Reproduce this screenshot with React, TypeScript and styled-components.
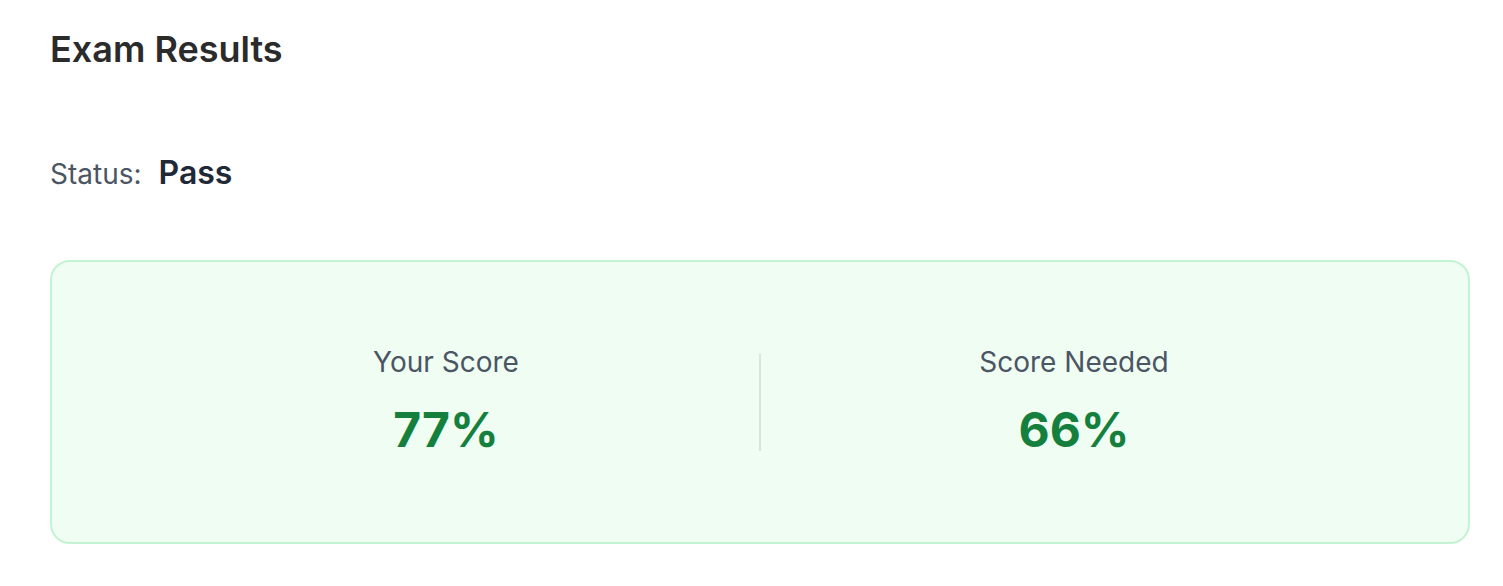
import React from "react";
import styled, { createGlobalStyle } from "styled-components";

const GlobalStyle = createGlobalStyle`
  html, body {
    margin: 0;
    padding: 0;
    background: #ffffff;
    font-family: Inter, "Noto Sans", sans-serif;
  }
`;

type Score = { label: string; value: number };

const scores: Score[] = [
  { label: "Your Score", value: 77 },
  { label: "Score Needed", value: 66 },
];

const App = () => {
  return (
    <>
      <GlobalStyle />
      <Page>
        <Title>Exam Results</Title>
        <StatusRow>
          <StatusLabel>Status:</StatusLabel>
          <StatusValue>Pass</StatusValue>
        </StatusRow>
        <ScoreCard>
          <ScoreCell>
            <ScoreLabel>{scores[0].label}</ScoreLabel>
            <ScoreValue>{scores[0].value}%</ScoreValue>
          </ScoreCell>
          <Divider />
          <ScoreCell>
            <ScoreLabel>{scores[1].label}</ScoreLabel>
            <ScoreValue>{scores[1].value}%</ScoreValue>
          </ScoreCell>
        </ScoreCard>
      </Page>
    </>
  );
};
export default App;

const Page = styled.div`
  display: flex;
  flex-direction: column;
  padding: 26px 33px 40px 50px;
`;

const Title = styled.h1`
  margin: 0;
  font-size: 36px;
  line-height: 46px;
  font-weight: 600;
  color: #2b2b2b;
`;

const StatusRow = styled.div`
  display: flex;
  align-items: baseline;
  gap: 17px;
  margin-top: 81px;
  line-height: 40px;
`;

const StatusLabel = styled.span`
  font-size: 28px;
  color: #4b5563;
`;

const StatusValue = styled.span`
  font-size: 32px;
  font-weight: 600;
  color: #1f2937;
`;

const ScoreCard = styled.div`
  margin-top: 66px;
  height: 284px;
  box-sizing: border-box;
  display: grid;
  grid-template-columns: 1fr 2px 1fr;
  align-items: center;
  padding: 0 81px;
  background: #effdf3;
  border: 2px solid #c3f3d2;
  border-radius: 20px;
`;

const ScoreCell = styled.div`
  display: flex;
  flex-direction: column;
  align-items: center;
  gap: 22px;
`;

const ScoreLabel = styled.div`
  font-size: 28px;
  line-height: 34px;
  color: #4b5563;
`;

const ScoreValue = styled.div`
  font-size: 48px;
  line-height: 58px;
  font-weight: 700;
  color: #15803d;
`;

const Divider = styled.div`
  width: 2px;
  height: 97px;
  background: #d9e6dd;
`;
